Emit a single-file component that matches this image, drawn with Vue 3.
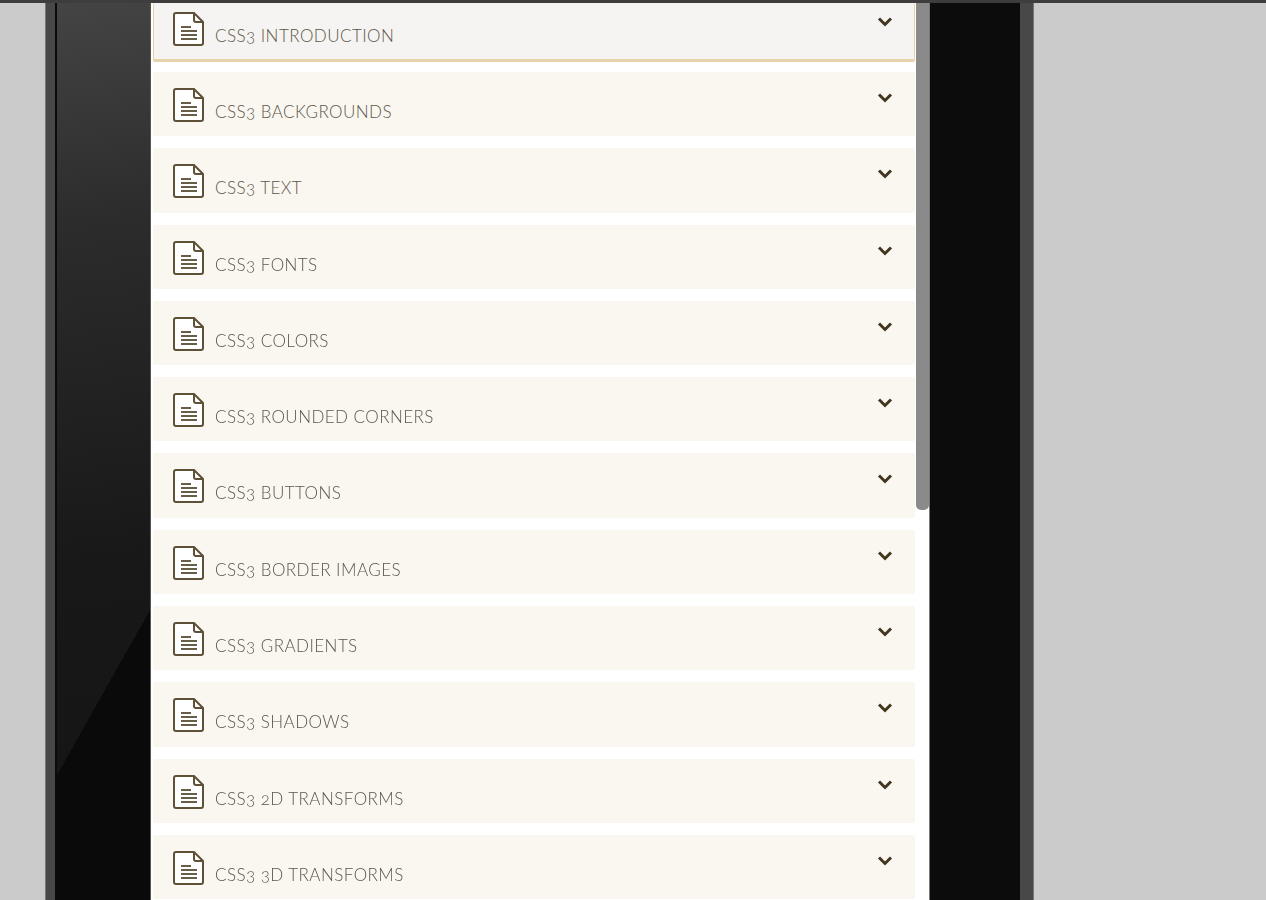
<script setup>
const rows = [
  'CSS3 INTRODUCTION',
  'CSS3 BACKGROUNDS',
  'CSS3 TEXT',
  'CSS3 FONTS',
  'CSS3 COLORS',
  'CSS3 ROUNDED CORNERS',
  'CSS3 BUTTONS',
  'CSS3 BORDER IMAGES',
  'CSS3 GRADIENTS',
  'CSS3 SHADOWS',
  'CSS3 2D TRANSFORMS',
  'CSS3 3D TRANSFORMS'
];
</script>

<template>
  <div class="page">
    <div class="topbar"></div>
    <div class="main">
      <div class="device">
        <div class="bezel-left"></div>
        <div class="gloss"></div>
        <div class="panel">
          <ul class="list">
            <li v-for="(row, i) in rows" :key="row" class="row" :class="{ active: i === 0 }">
              <svg class="doc" width="32" height="36" viewBox="0 0 32 36" fill="none">
                <path d="M3 2h18l9 9v21a2 2 0 0 1-2 2H3a2 2 0 0 1-2-2V4a2 2 0 0 1 2-2z" fill="#fff" stroke="#5f5138" stroke-width="2"/>
                <path d="M21 2v7a2 2 0 0 0 2 2h7" stroke="#5f5138" stroke-width="2"/>
                <path d="M8 16h10M8 20h16M8 24h16M8 28h16" stroke="#6a5d47" stroke-width="2"/>
              </svg>
              <span class="label">{{ row }}</span>
              <svg class="chev" width="16" height="11" viewBox="0 0 16 11" fill="none">
                <path d="M2 2.5l6 6 6-6" stroke="#43361f" stroke-width="3"/>
              </svg>
            </li>
          </ul>
          <div class="track"><div class="thumb"></div></div>
        </div>
        <div class="black"></div>
        <div class="bezel-right"></div>
      </div>
    </div>
  </div>
</template>

<style>
html, body {
  margin: 0;
  background: #cbcbcb;
}
</style>

<style scoped>
.page {
  height: 900px;
  overflow: hidden;
  display: flex;
  flex-direction: column;
  background: #cbcbcb;
}

.topbar {
  height: 3px;
  flex: none;
  background: #3d3d3d;
}

.main {
  flex: 1;
  min-height: 0;
  padding-left: 45px;
}

.device {
  width: 989px;
  height: 100%;
  display: flex;
}

.bezel-left {
  width: 10px;
  background: #484848;
  border-left: 1px solid #777;
  box-sizing: border-box;
}

.gloss {
  width: 95px;
  border-left: 2px solid #0a0a0a;
  box-sizing: border-box;
  background:
    linear-gradient(119.4deg, transparent 379px, #0a0a0a 379px),
    linear-gradient(172deg, #444 0, #2c2c2c 220px, #181818 560px, #141414 100%);
}

.panel {
  width: 779px;
  display: flex;
  background: #fff;
  border-left: 1px solid #555;
  box-sizing: border-box;
}

.list {
  list-style: none;
  margin: 0;
  padding: 0 0 0 2px;
  width: 762px;
  flex: none;
  display: flex;
  flex-direction: column;
  gap: 12px;
  filter: blur(0.4px);
}

.row {
  height: 64.3px;
  flex: none;
  box-sizing: border-box;
  display: flex;
  align-items: flex-start;
  padding: 15px 22px 0 20px;
  background: #faf7f1;
  border-radius: 2px;
}

.row.active {
  height: 59px;
  margin-bottom: -2px;
  padding-top: 8px;
  background: #f5f4f2;
  border: 1px solid #e6d3aa;
  border-top: none;
  border-bottom-width: 3px;
  padding-left: 19px;
  padding-right: 21px;
}

.doc {
  flex: none;
}

.label {
  margin: 15px 0 0 10px;
  flex: 1;
  font-family: Lato, sans-serif;
  font-size: 17px;
  font-weight: 300;
  font-feature-settings: "onum";
  letter-spacing: 0.45px;
  line-height: 20px;
  color: #5d5548;
}

.chev {
  flex: none;
  margin-top: 5px;
}

.track {
  width: 14px;
  flex: none;
  padding-left: 1px;
  box-sizing: border-box;
}

.thumb {
  width: 13px;
  height: 507px;
  background: #8a8a8a;
  border-radius: 0 0 5px 5px;
}

.black {
  width: 91px;
  background: #0c0c0c;
  border-left: 1px solid #777;
  box-sizing: border-box;
}

.bezel-right {
  width: 14px;
  background: #484848;
  border-right: 1px solid #777;
  box-sizing: border-box;
}
</style>
